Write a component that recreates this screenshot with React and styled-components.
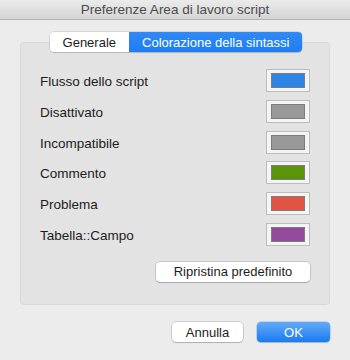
import React from "react";
import styled, { createGlobalStyle } from "styled-components";

const Global = createGlobalStyle`
  html, body { margin: 0; padding: 0; }
  body {
    background: #ececec;
    font-family: "Liberation Sans", Arial, sans-serif;
    -webkit-font-smoothing: antialiased;
  }
`;

const Window = styled.div`
  width: 350px;
  height: 360px;
  background: #ececec;
  display: flex;
  flex-direction: column;
  overflow: hidden;
`;

const TitleBar = styled.div`
  height: 19px;
  border-bottom: 1px solid #b4b4b4;
  background: linear-gradient(#ebebeb, #d5d5d5);
  display: flex;
  align-items: center;
  justify-content: center;
  font-size: 13.5px;
  color: #4b4b4b;
`;

const Content = styled.div`
  display: flex;
  flex-direction: column;
  padding: 12px 20px 0 20px;
`;

const Tabs = styled.div`
  position: relative;
  z-index: 1;
  align-self: center;
  margin-left: 2px;
  display: flex;
  height: 20px;
  margin-bottom: -10px;
  border-radius: 4px;
  box-shadow: 0 0 0 0.5px rgba(0, 0, 0, 0.18), 0 1px 1px rgba(0, 0, 0, 0.12);
  overflow: hidden;
`;

const Tab = styled.div`
  display: flex;
  align-items: center;
  padding: 0 13px;
  font-size: 13px;
  color: ${(p) => (p.$active ? "#ffffff" : "#1a1a1a")};
  background: ${(p) => (p.$active ? "linear-gradient(#3089f6, #1f7ef3)" : "#ffffff")};
`;

const Panel = styled.div`
  box-sizing: border-box;
  background: #e3e3e3;
  border: 1px solid #d8d8d8;
  border-radius: 4px;
  height: 263px;
  padding: 26px 19px 0 19px;
  display: flex;
  flex-direction: column;
`;

const Rows = styled.div`
  display: flex;
  flex-direction: column;
  gap: 7.8px;
`;

const Row = styled.div`
  display: flex;
  align-items: center;
  justify-content: space-between;
  height: 23px;
`;

const Label = styled.span`
  font-size: 13.5px;
  color: #1c1c1c;
  padding-top: 2px;
`;

const Well = styled.div`
  box-sizing: border-box;
  width: 44px;
  height: 23px;
  border: 1px solid #bdbdbd;
  background: #f4f4f4;
  display: flex;
  align-items: center;
  justify-content: center;
`;

const Swatch = styled.div`
  box-sizing: border-box;
  width: 34px;
  height: 15px;
  border: 1px solid #7c7c7c;
  background: ${(p) => p.$color};
`;

const Button = styled.button`
  box-sizing: border-box;
  height: 20px;
  width: ${(p) => p.$w}px;
  padding: 0;
  border-radius: 4px;
  font-family: inherit;
  font-size: 13px;
  border: none;
  color: ${(p) => (p.$primary ? "#ffffff" : "#1c1c1c")};
  background: ${(p) =>
    p.$primary ? "linear-gradient(#64abf8, #1a7bf1)" : "#ffffff"};
  box-shadow: ${(p) =>
    p.$primary
      ? "0 0 0 0.5px rgba(0,80,200,0.35), 0 1px 1px rgba(0,0,0,0.15)"
      : "0 0 0 0.5px rgba(0,0,0,0.25), 0 1px 1px rgba(0,0,0,0.15)"};
`;

const ResetRow = styled.div`
  display: flex;
  justify-content: flex-end;
  margin-top: 16px;
`;

const Footer = styled.div`
  display: flex;
  justify-content: flex-end;
  gap: 14px;
  margin-top: 17px;
`;

const rows = [
  ["Flusso dello script", "#2f85e6"],
  ["Disattivato", "#999999"],
  ["Incompatibile", "#999999"],
  ["Commento", "#5a9409"],
  ["Problema", "#e15444"],
  ["Tabella::Campo", "#944a9b"],
];

export default function App() {
  return (
    <>
      <Global />
      <Window>
        <TitleBar>Preferenze Area di lavoro script</TitleBar>
        <Content>
          <Tabs>
            <Tab>Generale</Tab>
            <Tab $active>Colorazione della sintassi</Tab>
          </Tabs>
          <Panel>
            <Rows>
              {rows.map(([label, color]) => (
                <Row key={label}>
                  <Label>{label}</Label>
                  <Well>
                    <Swatch $color={color} />
                  </Well>
                </Row>
              ))}
            </Rows>
            <ResetRow>
              <Button $w={154}>Ripristina predefinito</Button>
            </ResetRow>
          </Panel>
          <Footer>
            <Button $w={71}>Annulla</Button>
            <Button $w={73} $primary>OK</Button>
          </Footer>
        </Content>
      </Window>
    </>
  );
}
